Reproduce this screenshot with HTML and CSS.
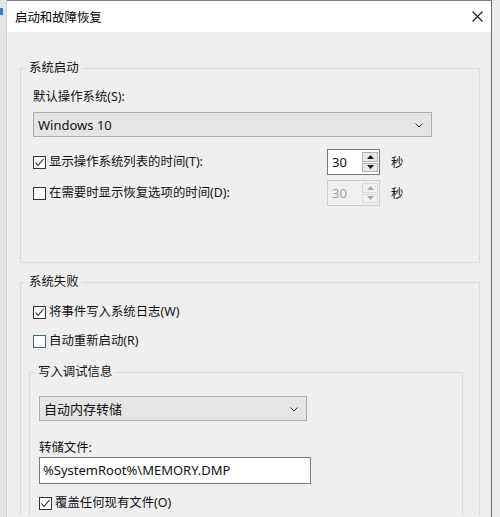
FILE: index.html
```html
<!DOCTYPE html>
<html lang="zh-CN">
<head>
  <meta charset="UTF-8">
  <meta name="viewport" content="width=device-width, initial-scale=1.0">
  <title>启动和故障恢复</title>
  <link rel="stylesheet" href="styles.css">
</head>
<body>
  <div class="backdrop-left"><span class="tab-mark"></span></div>

  <div class="dialog">
    <div class="titlebar">
      <span class="title">启动和故障恢复</span>
      <span class="close">
        <svg width="11" height="11" viewBox="0 0 11 11"><path d="M0.5 0.5 L10.5 10.5 M10.5 0.5 L0.5 10.5" stroke="#1a1a1a" stroke-width="1.1" fill="none"/></svg>
      </span>
    </div>

    <div class="content">
      <fieldset class="group group-startup">
        <legend>系统启动</legend>
        <div class="field-label">默认操作系统(S):</div>
        <div class="select select-os">
          <span>Windows 10</span>
          <svg class="chevron" width="8" height="5" viewBox="0 0 8 5"><polyline points="0.5,0.5 4,4 7.5,0.5" stroke="#333" stroke-width="1" fill="none"/></svg>
        </div>

        <div class="timer-row first">
          <label class="check timer-check">
            <span class="box"><svg width="11" height="11" viewBox="0 0 11 11"><polyline points="1.5,5.5 4,8.5 9.5,2" stroke="#1a1a1a" stroke-width="1.1" fill="none"/></svg></span>
            显示操作系统列表的时间(T):
          </label>
          <div class="spin">
            <span class="spin-value">30</span>
            <div class="spin-buttons">
              <span class="spin-btn"><svg width="7" height="4" viewBox="0 0 7 4"><polygon points="0,4 3.5,0 7,4" fill="#1a1a1a"/></svg></span>
              <span class="spin-btn"><svg width="7" height="4" viewBox="0 0 7 4"><polygon points="0,0 7,0 3.5,4" fill="#1a1a1a"/></svg></span>
            </div>
          </div>
          <span class="unit">秒</span>
        </div>

        <div class="timer-row second">
          <label class="check timer-check">
            <span class="box"></span>
            在需要时显示恢复选项的时间(D):
          </label>
          <div class="spin disabled">
            <span class="spin-value">30</span>
            <div class="spin-buttons">
              <span class="spin-btn"><svg width="7" height="4" viewBox="0 0 7 4"><polygon points="0,4 3.5,0 7,4" fill="#a8a8a8"/></svg></span>
              <span class="spin-btn"><svg width="7" height="4" viewBox="0 0 7 4"><polygon points="0,0 7,0 3.5,4" fill="#a8a8a8"/></svg></span>
            </div>
          </div>
          <span class="unit">秒</span>
        </div>
      </fieldset>

      <fieldset class="group group-failure">
        <legend>系统失败</legend>
        <label class="check row-check">
          <span class="box"><svg width="11" height="11" viewBox="0 0 11 11"><polyline points="1.5,5.5 4,8.5 9.5,2" stroke="#1a1a1a" stroke-width="1.1" fill="none"/></svg></span>
          将事件写入系统日志(W)
        </label>
        <label class="check row-check restart">
          <span class="box focus"></span>
          自动重新启动(R)
        </label>

        <fieldset class="group group-debug">
          <legend>写入调试信息</legend>
          <div class="select select-dump">
            <span>自动内存转储</span>
            <svg class="chevron" width="8" height="5" viewBox="0 0 8 5"><polyline points="0.5,0.5 4,4 7.5,0.5" stroke="#333" stroke-width="1" fill="none"/></svg>
          </div>
          <div class="field-label dump-label">转储文件:</div>
          <div class="text-input">%SystemRoot%\MEMORY.DMP</div>
          <label class="check overwrite">
            <span class="box"><svg width="11" height="11" viewBox="0 0 11 11"><polyline points="1.5,5.5 4,8.5 9.5,2" stroke="#1a1a1a" stroke-width="1.1" fill="none"/></svg></span>
            覆盖任何现有文件(O)
          </label>
          <div class="spacer"></div>
        </fieldset>
      </fieldset>
    </div>
  </div>

  <div class="backdrop-right"></div>
</body>
</html>
```

FILE: styles.css
```css
* {
  box-sizing: border-box;
  margin: 0;
  padding: 0;
}

html, body {
  height: 100%;
  background: #e6e6e6;
  font-family: "Noto Sans", "Noto Sans CJK SC", sans-serif;
  font-size: 12.4px;
  color: #111;
}

body {
  display: flex;
  height: 517px;
  overflow: hidden;
}

.backdrop-left {
  width: 7px;
  flex-shrink: 0;
  background: #e4e4e4;
  border-right: 1px solid #d4d4d4;
  padding-top: 8px;
}

.tab-mark {
  display: block;
  width: 3px;
  height: 7px;
  background: #3d7fc4;
}

.backdrop-right {
  flex: 1;
  background: #ececec;
}

.dialog {
  width: 485px;
  flex-shrink: 0;
  background: #f0eff0;
  border-top: 1px solid #7c7c7c;
  border-right: 1px solid #6a6a6a;
  display: flex;
  flex-direction: column;
}

.titlebar {
  height: 31px;
  flex-shrink: 0;
  background: #fff;
  display: flex;
  align-items: center;
  justify-content: space-between;
  padding-left: 8px;
}

.title {
  font-size: 12.4px;
  color: #000;
}

.close {
  width: 28px;
  display: flex;
  justify-content: center;
  margin-top: -1px;
}

.content {
  flex-shrink: 0;
  padding: 28px 11px 0 13px;
}

.group {
  margin: 0;
  min-width: 0;
  border: 1px solid #dcdcdc;
}

.group legend {
  padding: 0 3px;
  line-height: 16px;
}

.group-startup {
  padding: 13px 12px 56px 12px;
}

.group-startup legend {
  margin-left: -7px;
}

.field-label {
  line-height: 16px;
}

.select {
  display: flex;
  align-items: center;
  justify-content: space-between;
  height: 25px;
  background: #e5e5e5;
  border: 1px solid #adadad;
  padding: 0 8px 0 4px;
  font-size: 13px;
}

.select-os {
  width: 399px;
  margin-top: 7px;
}

.chevron {
  margin-top: 1px;
}

.timer-row {
  display: flex;
  align-items: center;
  height: 26px;
}

.timer-row.first {
  margin-top: 12px;
}

.timer-row.second {
  margin-top: 5px;
}

.check {
  display: flex;
  align-items: center;
  gap: 3px;
  line-height: 16px;
}

.timer-check {
  width: 294px;
}

.box {
  width: 13px;
  height: 13px;
  flex-shrink: 0;
  background: #fff;
  border: 1px solid #333;
  display: flex;
  align-items: center;
  justify-content: center;
}

.box.focus {
  border-color: #2c6b93;
}

.spin {
  display: flex;
  width: 53px;
  height: 26px;
  background: #fff;
  border: 1px solid #7a7a7a;
  padding: 2px 1px 2px 0;
}

.spin-value {
  flex: 1;
  padding-left: 4px;
  line-height: 20px;
  font-size: 13px;
}

.spin-buttons {
  width: 16px;
  display: flex;
  flex-direction: column;
  gap: 1px;
}

.spin-btn {
  flex: 1;
  display: flex;
  align-items: center;
  justify-content: center;
  background: #e8e8e8;
  border: 1px solid #b4b4b4;
}

.spin.disabled {
  background: #f0f0f0;
  border-color: #cdcdcd;
}

.spin.disabled .spin-value {
  color: #a3a3a3;
}

.spin.disabled .spin-btn {
  background: #f0f0f0;
  border-color: #d9d9d9;
}

.unit {
  margin-left: 11px;
}

.group-failure {
  margin-top: 11px;
  padding: 14px 16px 0 8px;
  border-bottom: none;
}

.group-failure legend {
  margin-left: -3px;
}

.row-check {
  padding-left: 4px;
}

.row-check.restart {
  margin-top: 13px;
}

.group-debug {
  margin-top: 15px;
  padding: 16px 9px 0 9px;
  border-bottom: none;
}

.group-debug legend {
  margin-left: -4px;
}

.select-dump {
  width: 268px;
}

.dump-label {
  margin-top: 19px;
}

.text-input {
  width: 272px;
  height: 27px;
  margin-top: 1px;
  background: #fff;
  border: 1px solid #7a7a7a;
  padding-left: 3px;
  line-height: 25px;
  font-size: 13px;
}

.overwrite {
  margin-top: 11px;
}

.spacer {
  height: 5px;
}
```
